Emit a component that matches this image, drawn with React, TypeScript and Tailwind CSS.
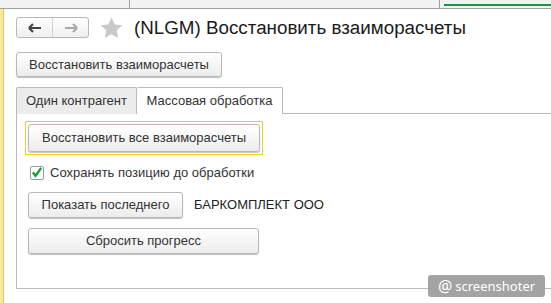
import React from 'react';

function Btn({ children, className = '' }: { children: React.ReactNode; className?: string }) {
  return (
    <div
      className={`flex items-center justify-center rounded-[3px] border border-[#b8b8b8] bg-gradient-to-b from-white to-[#ececec] text-[13px] text-[#333] shadow-[0_1px_1px_rgba(0,0,0,0.25)] ${className}`}
    >
      {children}
    </div>
  );
}

export default function App() {
  return (
    <div className="relative h-[303px] w-[551px] overflow-hidden bg-white font-['Liberation_Sans',Arial,sans-serif]">
      {/* top strip */}
      <div className="flex h-[9px] border-b border-[#a0a0a0] bg-[#f2f2f2]">
        <div className="w-[130px] border-r border-[#a0a0a0]" />
        <div className="w-[310px] border-r border-[#a0a0a0]" />
        <div className="flex-1 pl-[4px] pt-[4px]">
          <div className="h-[2px] bg-[#11984a]" />
        </div>
      </div>

      <div className="flex">
        {/* left yellow strip */}
        <div className="h-[294px] w-[4px] border-r border-[#d8c57a] bg-[#fbe99a]" />

        <div className="flex-1 pl-[12px]">
          {/* header */}
          <div className="mt-[8px] flex h-[21px] items-center">
            <div className="flex h-[21px] w-[73px] rounded-[3px] border border-[#b8b8b8] bg-gradient-to-b from-white to-[#efefef]">
              <div className="flex w-[36px] items-center justify-center border-r border-[#d0d0d0]">
                <svg width="14" height="10" viewBox="0 0 14 10">
                  <path d="M1 5h12M1 5l4-4M1 5l4 4" stroke="#444" strokeWidth="2.2" fill="none" />
                </svg>
              </div>
              <div className="flex flex-1 items-center justify-center">
                <svg width="14" height="10" viewBox="0 0 14 10">
                  <path d="M1 5h12M13 5l-4-4M13 5l-4 4" stroke="#a8a8a8" strokeWidth="2.2" fill="none" />
                </svg>
              </div>
            </div>
            <svg className="ml-[11px]" width="23" height="22" viewBox="0 0 24 23">
              <path
                d="M12 0.5l3.4 7.3 7.9.9-5.9 5.4 1.6 7.9L12 18l-7 4 1.6-7.9L0.7 8.7l7.9-.9z"
                fill="#c9c9c9"
              />
            </svg>
            <div className="ml-[11px] mt-[2px] text-[18.8px] leading-none text-[#1a1a1a]">(NLGM) Восстановить взаиморасчеты</div>
          </div>

          <Btn className="mt-[14px] h-[25px] w-[206px]">Восстановить взаиморасчеты</Btn>

          {/* tabs */}
          <div className="mt-[9px] flex h-[28px] items-end">
            <div className="flex h-[27px] w-[121px] items-center justify-center rounded-t-[2px] border border-b-0 border-[#b8b8b8] bg-[#ececec] text-[13px] text-[#333]">
              Один контрагент
            </div>
            <div className="flex h-[27px] w-[146px] items-center justify-center rounded-t-[2px] border border-b-0 border-l-0 border-[#b8b8b8] bg-white text-[13px] text-[#333]">
              Массовая обработка
            </div>
            <div className="flex-1 border-b border-[#b8b8b8]" />
          </div>

          {/* panel */}
          <div className="h-[175px] border border-t-0 border-r-0 border-[#b8b8b8] pl-[8px] pt-[7px]">
            <div className="w-[238px] border border-[#f2cc2b] p-[2px]">
              <Btn className="h-[28px]">Восстановить все взаиморасчеты</Btn>
            </div>

            <div className="mt-[8px] flex items-center pl-[5px]">
              <div className="flex h-[14px] w-[14px] items-center justify-center rounded-[2px] border border-[#999] bg-white">
                <svg width="13" height="13" viewBox="0 0 13 13" className="-mt-[1px]">
                  <path d="M2 6.5l3 3.5 6-8.5" stroke="#1e9a3e" strokeWidth="2.6" fill="none" />
                </svg>
              </div>
              <span className="ml-[6px] text-[13px] text-[#333]">Сохранять позицию до обработки</span>
            </div>

            <div className="mt-[9px] flex items-center pl-[3px]">
              <Btn className="h-[26px] w-[155px]">Показать последнего</Btn>
              <span className="ml-[11px] text-[13px] text-[#222]">БАРКОМПЛЕКТ ООО</span>
            </div>

            <Btn className="ml-[3px] mt-[10px] h-[26px] w-[231px]">Сбросить прогресс</Btn>
          </div>
        </div>
      </div>

      {/* watermark */}
      <div className="absolute left-[428px] top-[275px] flex h-[22px] w-[117px] items-center justify-center gap-[3px] rounded-[3px] bg-[#a3a3a3] font-['Noto_Sans',sans-serif] text-[13px] text-white">
        <span className="text-[16px] leading-none">@</span>
        <span className="leading-none">screenshoter</span>
      </div>
    </div>
  );
}
